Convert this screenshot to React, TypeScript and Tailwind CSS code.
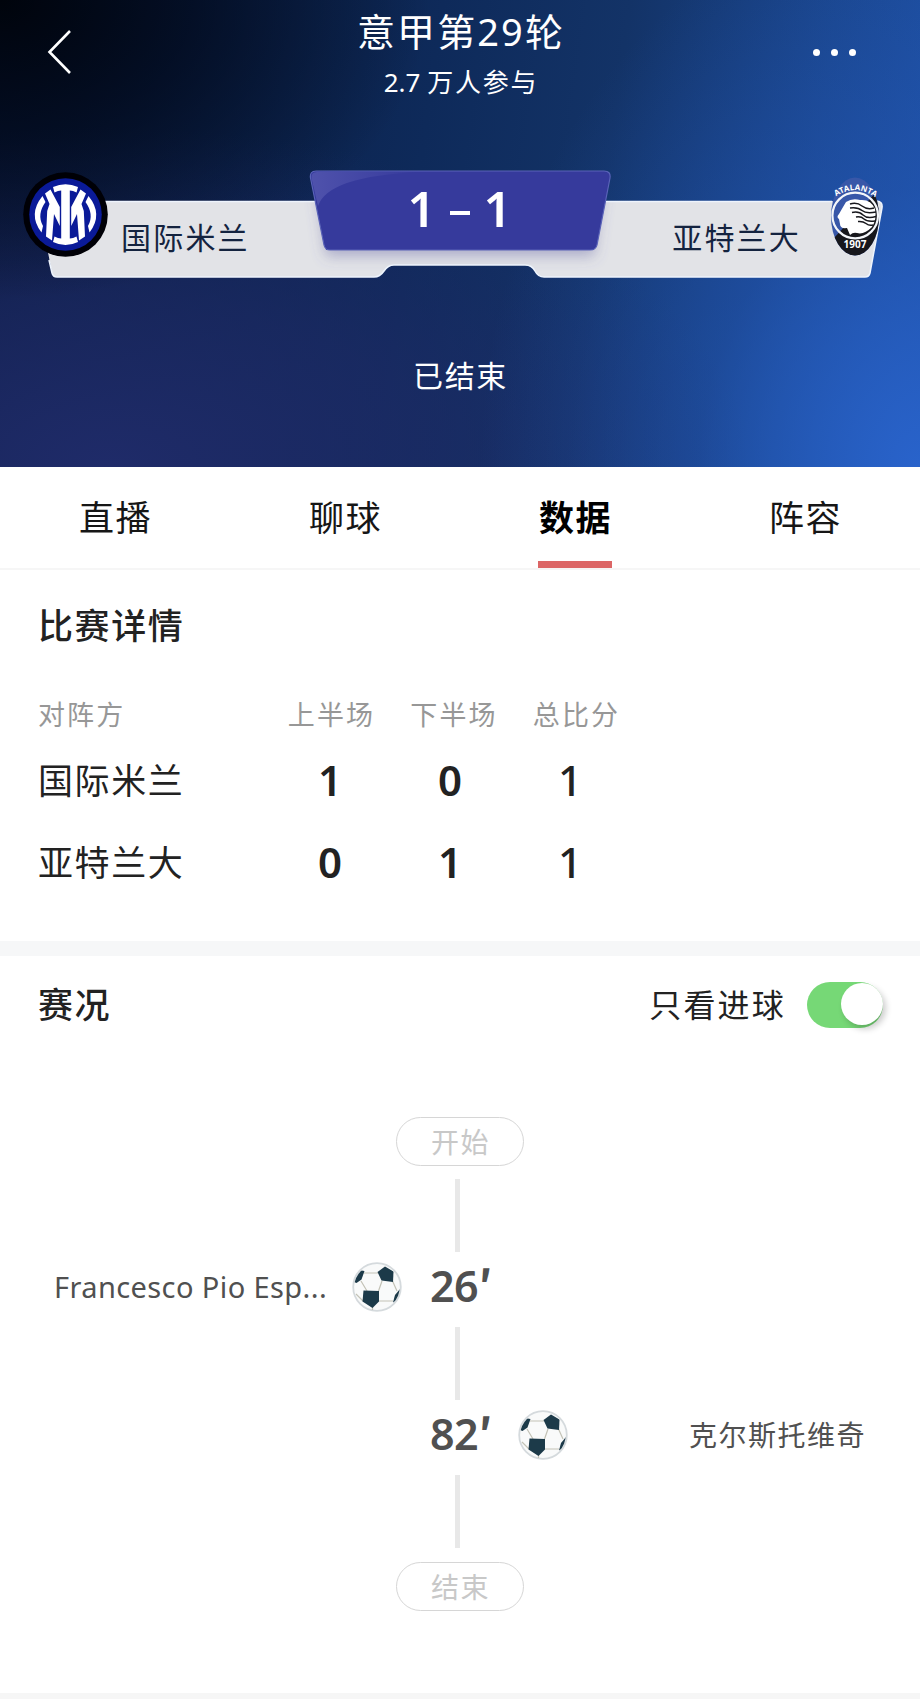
import React, { useState } from 'react';

interface ScoreRow {
  team: string;
  first: number;
  second: number;
  total: number;
}

interface GoalEvent {
  minute: number;
  player: string;
  side: 'home' | 'away';
}

const TABS = ['直播', '聊球', '数据', '阵容'];

const SCORES: ScoreRow[] = [
  { team: '国际米兰', first: 1, second: 0, total: 1 },
  { team: '亚特兰大', first: 0, second: 1, total: 1 },
];

const GOALS: GoalEvent[] = [
  { minute: 26, player: 'Francesco Pio Esp...', side: 'home' },
  { minute: 82, player: '克尔斯托维奇', side: 'away' },
];

const InterCrest: React.FC = () => (
  <svg className="w-[85px] h-[85px]" viewBox="0 0 85 85">
    <circle cx="42.5" cy="42.5" r="42.3" fill="#000006" />
    <circle cx="42.5" cy="42.5" r="36.3" fill="#0a1a98" />
    <g fill="#fff">
      <path d="M30 15 Q42.5 9.5 55 15 L53.5 20.5 Q50 18.5 46.8 18.5 V66.5 Q50 66.5 53.5 64.5 L55 70 Q42.5 76 30 70 L31.5 64.5 Q35 66.5 38.2 66.5 V18.5 Q35 18.5 31.5 20.5 Z" />
      <path d="M22 21.5 L27.5 17.5 L36.8 35 V54 L31 42 L29 68.5 L23 64.5 L24.2 39 L26.5 32 Z" />
      <path d="M63 21.5 L57.5 17.5 L48.2 35 V54 L54 42 L56 68.5 L62 64.5 L60.8 39 L58.5 32 Z" />
      <path d="M19.5 24 Q4.5 42.5 18.5 60.5 L20 54 Q13.5 42.5 22.5 30 Z" />
      <path d="M65.5 24 Q80.5 42.5 66.5 60.5 L65 54 Q71.5 42.5 62.5 30 Z" />
    </g>
  </svg>
);

const AtalantaCrest: React.FC = () => (
  <svg className="w-[50px] h-[80px]" viewBox="0 0 50 80">
    <defs>
      <clipPath id="crest">
        <ellipse cx="25" cy="40.5" rx="24" ry="39" />
      </clipPath>
      <path id="arc" d="M6 20.5 Q25 8 44 20.5" />
    </defs>
    <g clipPath="url(#crest)">
      <rect width="50" height="80" fill="#3857a8" />
      <path d="M50 12 L4 62 V80 H50 Z" fill="#17171c" />
    </g>
    <circle cx="25.2" cy="39.5" r="22.8" fill="none" stroke="#f4f6fa" strokeWidth="2.2" />
    <path
      d="M16 26 Q22 22 30 24 Q41 23 45 33 Q47 43 42 51 Q34 59 27 57 Q23 56 20 59 L17 52 Q10 53 10 48 L9 43 Q6 41 9 38 Q13 31 16 26 Z"
      fill="#fff"
    />
    <g fill="none" stroke="#17171c" strokeWidth="1.5">
      <path d="M20 28 Q27 26 32 30 T44 32" />
      <path d="M20 32 Q28 31 32 34.5 T46 36" />
      <path d="M22 36.5 Q29 35 33 39 T46 40.5" />
      <path d="M26 41 Q31 40 34 43 T45 45" />
      <path d="M28 45.5 Q33 45 36 47.5 T43 49" />
    </g>
    <text className="text-[8px] font-bold" fill="#fff">
      <textPath href="#arc" textLength="42">ATALANTA</textPath>
    </text>
    <text className="text-[10px] font-bold" x="25" y="71.5" fill="#fff" textAnchor="middle">
      1907
    </text>
  </svg>
);

const Ball: React.FC = () => (
  <svg className="w-[50px] h-[50px] shrink-0" viewBox="0 0 50 50">
    <defs>
      <clipPath id="ball">
        <circle cx="25" cy="25" r="22.8" />
      </clipPath>
    </defs>
    <circle cx="25" cy="25" r="23.8" fill="#f9fafa" stroke="#d5dadd" strokeWidth="1.8" />
    <path
      d="M12 11 H26 M9 19 L15 29 M30 19 L26.5 29 M40.5 19 L45 29 M27 39 H41 M11 39 L4 32 M20.5 45 V48"
      fill="none"
      stroke="#c3c2b6"
      strokeWidth="1.2"
    />
    <g fill="#1c3a49" clipPath="url(#ball)">
      <path d="M25.5 10 L33 4.5 L41.5 9.5 L41 20 L29.5 18.5 Z" />
      <path d="M11.5 28.5 L27 29 L27 39.5 L20.5 46 L10.5 39.5 Z" />
      <path d="M2 20 L7 8 L12.5 9 L9.5 17.5 L4.5 21 Z" />
      <path d="M48 27 L47 38 L41 40.5 L43 33 Z" />
    </g>
  </svg>
);

const Scoreboard: React.FC = () => (
  <div className="relative mt-[70px] h-[120px]">
    <svg className="absolute inset-0 w-full h-full" viewBox="0 0 920 120">
      <defs>
        <filter id="shadow" x="-10%" y="-10%" width="120%" height="150%">
          <feDropShadow dx="0" dy="6" stdDeviation="7" floodColor="#5a5a9c" floodOpacity="0.4" />
        </filter>
        <linearGradient id="shine" x1="0" y1="0" x2="1" y2="0">
          <stop offset="0" stopColor="#4f52ac" />
          <stop offset="1" stopColor="#363a9c" />
        </linearGradient>
        <clipPath id="bar">
          <path d="M38 31 H876 Q883 31 882 38 L870 103 Q869 107 865 107 H544 Q538 107 535 101 Q532 95 525 95 H394 Q388 95 384 101 Q380 107 374 107 H57 Q53 107 52 103 Z" />
        </clipPath>
      </defs>
      <g clipPath="url(#bar)">
        <rect x="0" y="31" width="920" height="80" fill="#e2e3e7" />
        <path d="M317 12 H603 L594 80 H326 Z" fill="#363a9c" filter="url(#shadow)" />
      </g>
      <path
        d="M49 90 L52 103 Q53 107 57 107 H374 Q380 107 384 101 Q388 95 394 95 H525 Q532 95 535 101 Q538 107 544 107 H865 Q869 107 870 103 L882 38 Q883 31 876 31"
        fill="none"
        stroke="#eef4fd"
        strokeWidth="1.5"
      />
      <path d="M100 31.5 H315 M605 31.5 H832" stroke="#eef4fd" strokeWidth="1.5" />
      <path
        d="M316 1 H604 Q611 1 610 8 L597 75 Q596 80 590 80 H330 Q325 80 324 75 L310.5 8 Q309.5 1 316 1 Z"
        fill="#363a9c"
        stroke="#5a63b8"
        strokeWidth="1.2"
      />
      <path d="M317 2 H420 Q328 6 318 36 L311.5 8 Q311 2 317 2 Z" fill="url(#shine)" />
    </svg>
    <div className="relative flex h-full items-start justify-between pl-[23px] pr-[40px]">
      <div className="flex w-[280px] pt-[2px]">
        <InterCrest />
        <span className="ml-[13px] mt-[43px] text-[30px] leading-[46px] tracking-[2.2px] text-[#14233f]">国际米兰</span>
      </div>
      <div className="flex w-[300px] items-center justify-center gap-[14px] pt-[12px] pl-[6px] text-[49px] leading-[52px] font-semibold text-white">
        <span>1</span>
        <span className="mt-[9px] h-[4px] w-[20px] bg-white" />
        <span>1</span>
      </div>
      <div className="flex w-[270px] justify-end pt-[6px]">
        <span className="mr-[29px] mt-[39px] text-[30px] leading-[46px] tracking-[2.2px] text-[#14233f]">亚特兰大</span>
        <AtalantaCrest />
      </div>
    </div>
  </div>
);

const Connector: React.FC = () => <div className="h-[73px] w-[5px] mr-[5px] bg-[#e8e8e8]" />;

const Pill: React.FC<{ label: string }> = ({ label }) => (
  <div className="flex h-[49px] w-[128px] items-center justify-center rounded-full border border-[#d6d6d6] pl-[1px] text-[28px] tracking-[1.5px] text-[#c8c8c8]">
    {label}
  </div>
);

const GoalRow: React.FC<{ goal: GoalEvent }> = ({ goal }) => (
  <div className="flex h-[75px] w-full items-center px-[54px] pb-[6px] text-[#505050]">
    <div className="flex flex-1 items-center justify-between pr-[28px]">
      {goal.side === 'home' && (
        <>
          <span className="text-[29px] tracking-[0.4px] whitespace-nowrap">{goal.player}</span>
          <Ball />
        </>
      )}
    </div>
    <div className="w-[60px] pb-[5px] text-[43px] leading-none font-semibold tracking-[-0.5px] whitespace-nowrap">
      {goal.minute}
      <span className="font-['Noto_Sans_CJK_SC',sans-serif] leading-none">′</span>
    </div>
    <div className="flex flex-1 items-center justify-between pl-[28px]">
      {goal.side === 'away' && (
        <>
          <Ball />
          <span className="text-[28px] tracking-[1.5px] whitespace-nowrap">{goal.player}</span>
        </>
      )}
    </div>
  </div>
);

const App: React.FC = () => {
  const [activeTab, setActiveTab] = useState('数据');
  const [goalsOnly, setGoalsOnly] = useState(true);

  return (
    <div className="w-[920px] h-[1699px] overflow-hidden bg-white font-['Noto_Sans','Noto_Sans_CJK_SC',sans-serif] text-[#222]">
      {/* Match header */}
      <header className="h-[467px] text-white bg-[radial-gradient(ellipse_430px_300px_at_0%_0%,#00040c_0%,rgba(0,6,20,0.65)_45%,transparent_100%),radial-gradient(ellipse_440px_560px_at_100%_100%,#2963cb_0%,rgba(36,88,184,0.45)_50%,transparent_100%),radial-gradient(ellipse_640px_340px_at_12%_100%,#1f2b69_0%,rgba(30,42,102,0.65)_50%,transparent_100%),linear-gradient(98deg,#08183a_0%,#0e2a5a_45%,#133367_64%,#1a468e_85%,#1e51a6_100%)]">
        <div className="flex items-start justify-between px-[46px]">
          <svg className="mt-[28px] w-[46px] h-[48px]" viewBox="0 0 46 48" fill="none" stroke="#fff" strokeWidth="2.6">
            <path d="M24 3 L3.5 24 L24 45" />
          </svg>
          <div className="flex flex-col items-center">
            <h1 className="mt-[6px] pl-[2px] text-[38px] leading-[50px] tracking-[2.1px]">意甲第29轮</h1>
            <p className="mt-[8px] pl-[2px] text-[26px] leading-[36px]">
              2.7 <span className="tracking-[1.8px]">万人参与</span>
            </p>
          </div>
          <div className="mt-[49px] flex w-[46px] justify-end gap-[11px] pr-[18px]">
            <i className="size-[7px] shrink-0 rounded-full bg-white" />
            <i className="size-[7px] shrink-0 rounded-full bg-white" />
            <i className="size-[7px] shrink-0 rounded-full bg-white" />
          </div>
        </div>
        <Scoreboard />
        <p className="mt-[63px] pl-[1px] text-center text-[30px] leading-[46px] tracking-[1.7px]">已结束</p>
      </header>

      {/* Tabs */}
      <nav className="flex h-[103px] border-b-2 border-[#f6f6f6]">
        {TABS.map((tab) => (
          <button
            key={tab}
            onClick={() => setActiveTab(tab)}
            className={`flex flex-1 flex-col items-center justify-between pt-[26px] text-[35px] leading-[50px] tracking-[1.5px] ${
              tab === activeTab ? 'font-bold text-black' : 'text-[#161616]'
            }`}
          >
            <span className="pl-[1px]">{tab}</span>
            {tab === activeTab && <span className="h-[7px] w-[74px] bg-[#dc6666]" />}
          </button>
        ))}
      </nav>

      {/* Score by half */}
      <section className="h-[371px] px-[38px] pt-[31px]">
        <h2 className="text-[35px] leading-[50px] font-medium tracking-[1.6px]">比赛详情</h2>
        <div className="mt-[44px] grid grid-cols-[232px_123px_122px_123px] text-[27px] leading-[40px] tracking-[2.1px] text-[#979797]">
          <span>对阵方</span>
          <span className="text-center">上半场</span>
          <span className="text-center">下半场</span>
          <span className="text-center">总比分</span>
        </div>
        <div className="mt-[5px]">
          {SCORES.map((row) => (
            <div key={row.team} className="grid h-[82px] grid-cols-[232px_120px_120px_120px] items-center text-[35px] tracking-[1.6px]">
              <span>{row.team}</span>
              <span className="pb-[2px] text-center text-[42px] leading-none font-semibold tracking-normal">{row.first}</span>
              <span className="pb-[2px] text-center text-[42px] leading-none font-semibold tracking-normal">{row.second}</span>
              <span className="pb-[2px] text-center text-[42px] leading-none font-medium tracking-normal">{row.total}</span>
            </div>
          ))}
        </div>
      </section>
      <div className="h-[15px] bg-[#f6f7f8]" />

      {/* Goal timeline */}
      <section className="h-[737px]">
        <div className="flex h-[98px] items-center justify-between pl-[38px] pr-[37px]">
          <h2 className="text-[35px] font-medium tracking-[1.6px]">赛况</h2>
          <div className="flex items-center gap-[21px]">
            <span className="text-[32px] tracking-[2.2px]">只看进球</span>
            <button
              onClick={() => setGoalsOnly(!goalsOnly)}
              className={`flex h-[46px] w-[76px] items-center rounded-full ${goalsOnly ? 'justify-end bg-[#76d876]' : 'bg-gray-200'}`}
            >
              <span className="mb-[3px] size-[42px] rounded-full bg-white shadow-[3px_4px_6px_rgba(0,0,0,0.2)]" />
            </button>
          </div>
        </div>
        <div className="mt-[63px] flex flex-col items-center">
          <Pill label="开始" />
          <div className="h-[13px]" />
          <Connector />
          {GOALS.map((goal) => (
            <React.Fragment key={goal.minute}>
              <GoalRow goal={goal} />
              <Connector />
            </React.Fragment>
          ))}
          <div className="h-[14px]" />
          <Pill label="结束" />
        </div>
      </section>
      <div className="h-[6px] bg-[#f6f6f6]" />
    </div>
  );
};

export default App;
